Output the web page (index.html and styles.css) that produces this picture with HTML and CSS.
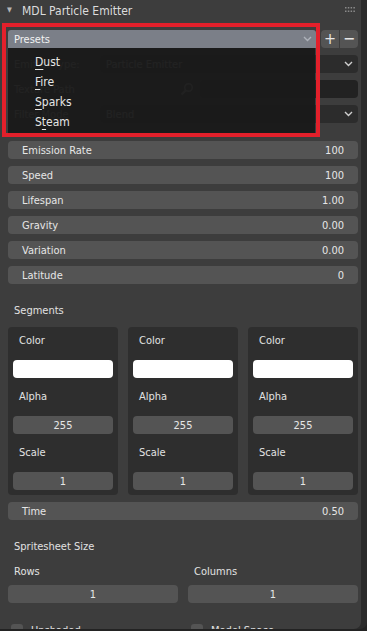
FILE: index.html
```html
<!DOCTYPE html>
<html lang="en">
<head>
    <meta charset="UTF-8">
    <meta name="viewport" content="width=device-width, initial-scale=1.0">
    <title>MDL Particle Emitter</title>
    <link rel="stylesheet" href="styles.css">
</head>
<body>
    <div class="region">
        <!-- header -->
        <div class="panel-header">
            <span class="arrow">&#9660;</span>
            <span class="panel-title">MDL Particle Emitter</span>
            <span class="grip">
                <svg width="10" height="6" viewBox="0 0 10 6"><g fill="#8a8a8a"><rect x="0" y="0" width="1.5" height="1.5"/><rect x="2.8" y="0" width="1.5" height="1.5"/><rect x="5.6" y="0" width="1.5" height="1.5"/><rect x="8.4" y="0" width="1.5" height="1.5"/><rect x="0" y="3.5" width="1.5" height="1.5"/><rect x="2.8" y="3.5" width="1.5" height="1.5"/><rect x="5.6" y="3.5" width="1.5" height="1.5"/><rect x="8.4" y="3.5" width="1.5" height="1.5"/></g></svg>
            </span>
        </div>

        <div class="panel-body">
            <div class="row presets-row">
                <div class="presets">
                    <span>Presets</span>
                    <svg class="chev" width="9" height="6" viewBox="0 0 9 6"><polyline points="1,1 4.5,4.5 8,1" fill="none" stroke="#aeb2ba" stroke-width="1.4"/></svg>
                </div>
                <div class="pm">
                    <span class="pm-btn">+</span>
                    <span class="pm-btn">&minus;</span>
                </div>
            </div>

            <div class="row prop">
                <span class="prop-label">Emitter Type:</span>
                <div class="dropdown">
                    <span>Particle Emitter</span>
                    <svg class="chev" width="9" height="6" viewBox="0 0 9 6"><polyline points="1,1 4.5,4.5 8,1" fill="none" stroke="#cfcfcf" stroke-width="1.4"/></svg>
                </div>
            </div>

            <div class="row prop">
                <span class="prop-label">Texture Path</span>
                <span class="search-btn">
                    <svg width="14" height="14" viewBox="0 0 14 14"><circle cx="8.5" cy="5.5" r="3.8" fill="none" stroke="#cfcfcf" stroke-width="1.5"/><line x1="5.8" y1="8.2" x2="1.5" y2="12.5" stroke="#cfcfcf" stroke-width="2"/></svg>
                </span>
                <div class="text-input"></div>
            </div>

            <div class="row prop">
                <span class="prop-label">Filter Mode</span>
                <div class="dropdown">
                    <span>Blend</span>
                    <svg class="chev" width="9" height="6" viewBox="0 0 9 6"><polyline points="1,1 4.5,4.5 8,1" fill="none" stroke="#cfcfcf" stroke-width="1.4"/></svg>
                </div>
            </div>

            <div class="field section"><span>Emission Rate</span><span>100</span></div>
            <div class="field"><span>Speed</span><span>100</span></div>
            <div class="field"><span>Lifespan</span><span>1.00</span></div>
            <div class="field"><span>Gravity</span><span>0.00</span></div>
            <div class="field"><span>Variation</span><span>0.00</span></div>
            <div class="field"><span>Latitude</span><span>0</span></div>

            <div class="label section">Segments</div>
            <div class="segments">
                <div class="segment">
                    <div class="seg-label">Color</div>
                    <div class="swatch"></div>
                    <div class="seg-label">Alpha</div>
                    <div class="field center">255</div>
                    <div class="seg-label">Scale</div>
                    <div class="field center">1</div>
                </div>
                <div class="segment">
                    <div class="seg-label">Color</div>
                    <div class="swatch"></div>
                    <div class="seg-label">Alpha</div>
                    <div class="field center">255</div>
                    <div class="seg-label">Scale</div>
                    <div class="field center">1</div>
                </div>
                <div class="segment">
                    <div class="seg-label">Color</div>
                    <div class="swatch"></div>
                    <div class="seg-label">Alpha</div>
                    <div class="field center">255</div>
                    <div class="seg-label">Scale</div>
                    <div class="field center">1</div>
                </div>
            </div>

            <div class="field"><span>Time</span><span>0.50</span></div>

            <div class="label section">Spritesheet Size</div>
            <div class="two-col">
                <div class="label">Rows</div>
                <div class="label">Columns</div>
            </div>
            <div class="two-col tight">
                <div class="field center">1</div>
                <div class="field center">1</div>
            </div>

            <div class="two-col section">
                <div class="check"><span class="box"></span><span>Unshaded</span></div>
                <div class="check"><span class="box"></span><span>Model Space</span></div>
            </div>
        </div>

        <!-- open presets menu -->
        <div class="menu">
            <div class="menu-item"><u>D</u>ust</div>
            <div class="menu-item"><u>F</u>ire</div>
            <div class="menu-item"><u>S</u>parks</div>
            <div class="menu-item">S<u>t</u>eam</div>
        </div>
        <div class="highlight"></div>
    </div>
</body>
</html>
```

FILE: styles.css
```css
body {
    margin: 0;
    padding: 0;
    background-color: #232323;
    font-family: "DejaVu Sans Condensed", "DejaVu Sans", sans-serif;
    font-stretch: condensed;
    font-size: 11px;
    color: #e2e2e2;
}
.region {
    position: relative;
    width: 361px;
    height: 629px;
    background-color: #3d3d3d;
    border-radius: 0 0 7px 0;
    overflow: hidden;
    box-shadow: 6px 0 0 #2b2b2b;
}
.panel-header {
    height: 22px;
    display: flex;
    align-items: center;
    padding: 0 0 0 7px;
}
.arrow {
    font-size: 7px;
    color: #b5b5b5;
    width: 15px;
    margin-top: -2px;
}
.panel-title {
    font-size: 12px;
    color: #dcdcdc;
    flex: 1;
    margin-top: -1px;
}
.grip {
    display: flex;
    margin-right: 6px;
    margin-top: -3px;
}
.panel-body {
    display: flex;
    flex-direction: column;
    gap: 7px;
    padding: 8px 3px 0 8px;
}
.section {
    margin-top: 11px;
}
.row {
    display: flex;
    height: 18px;
    align-items: center;
}
.presets {
    flex: 1;
    height: 18px;
    display: flex;
    align-items: center;
    justify-content: space-between;
    padding: 0 4px 0 6px;
    background-color: #7b7f88;
    color: #f2f2f2;
    border-radius: 3px 3px 0 0;
}
.pm {
    display: flex;
    margin-left: 5px;
    gap: 1px;
}
.pm-btn {
    width: 18px;
    height: 18px;
    background-color: #545454;
    color: #e6e6e6;
    font-size: 16px;
    line-height: 17px;
    text-align: center;
}
.pm-btn:first-child {
    border-radius: 4px 0 0 4px;
}
.pm-btn:last-child {
    border-radius: 0 4px 4px 0;
}
.prop-label {
    width: 86px;
    padding-left: 6px;
}
.dropdown {
    flex: 1;
    height: 18px;
    display: flex;
    align-items: center;
    justify-content: space-between;
    padding: 0 5px 0 6px;
    background-color: #2c2c2c;
    border-radius: 4px;
}
.search-btn {
    width: 22px;
    margin-left: 76px;
    display: flex;
    justify-content: center;
}
.text-input {
    flex: 1;
    height: 18px;
    margin-left: 2px;
    background-color: #222222;
    border-radius: 4px;
}
.field {
    height: 18px;
    display: flex;
    align-items: center;
    justify-content: space-between;
    padding: 0 14px;
    background-color: #545454;
    border-radius: 4px;
    color: #e6e6e6;
}
.field.center {
    justify-content: center;
    padding: 0;
}
.label {
    height: 18px;
    line-height: 18px;
    padding-left: 6px;
}
.segments {
    display: flex;
    gap: 10px;
}
.segment {
    flex: 1;
    display: flex;
    flex-direction: column;
    gap: 10px;
    padding: 5px;
    background-color: #2e2e2e;
    border-radius: 4px;
}
.seg-label {
    height: 18px;
    line-height: 18px;
    padding-left: 6px;
}
.swatch {
    height: 18px;
    background-color: #ffffff;
    border-radius: 4px;
}
.two-col {
    display: grid;
    grid-template-columns: 1fr 1fr;
    gap: 10px;
}
.two-col.tight {
    margin-top: -3px;
}
.check {
    display: flex;
    align-items: center;
    height: 18px;
    padding-left: 3px;
    gap: 8px;
}
.box {
    width: 12px;
    height: 12px;
    background-color: #545454;
    border-radius: 3px;
}
/* open dropdown */
.menu {
    position: absolute;
    left: 8px;
    top: 48px;
    width: 307px;
    height: 85px;
    padding-top: 4px;
    box-sizing: border-box;
    background-color: rgba(26, 26, 26, 0.96);
}
.menu-item {
    height: 20px;
    line-height: 20px;
    padding-left: 27px;
    font-size: 12px;
    color: #e6e6e6;
}
.menu-item u {
    text-decoration-thickness: 1px;
    text-underline-offset: 3px;
}
.highlight {
    position: absolute;
    left: 2px;
    top: 23px;
    width: 310px;
    height: 106px;
    border: 4px solid #e3202b;
}
```
